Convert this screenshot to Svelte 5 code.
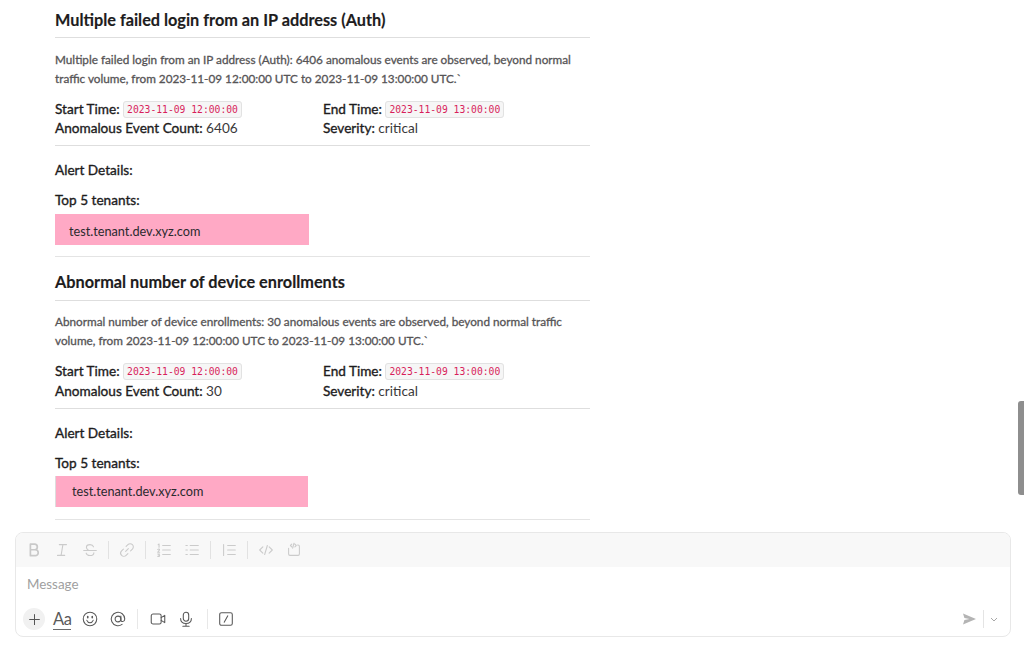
<script>
  const alerts = [
    { title: 'Multiple failed login from an IP address (Auth)', text: 'Multiple failed login from an IP address (Auth): 6406 anomalous events are observed, beyond normal traffic volume, from 2023-11-09 12:00:00 UTC to 2023-11-09 13:00:00 UTC.`', count: '6406', cls: 'first' },
    { title: 'Abnormal number of device enrollments', text: 'Abnormal number of device enrollments: 30 anomalous events are observed, beyond normal traffic volume, from 2023-11-09 12:00:00 UTC to 2023-11-09 13:00:00 UTC.`', count: '30', cls: 'second' }
  ];
</script>

<div class="page">
  <main class="feed">
    {#each alerts as a}
      <section class={'alert ' + a.cls}>
        <h2>{a.title}</h2>
        <p class="desc">{a.text}</p>
        <div class="fields">
          <div><b>Start Time:</b> <code>2023-11-09 12:00:00</code></div>
          <div><b>End Time:</b> <code>2023-11-09 13:00:00</code></div>
          <div><b>Anomalous Event Count:</b> {a.count}</div>
          <div><b>Severity:</b> critical</div>
        </div>
        <p class="label details">Alert Details:</p>
        <p class="label tenants">Top 5 tenants:</p>
        <div class="pink">test.tenant.dev.xyz.com</div>
      </section>
    {/each}
  </main>

  <div class="scrollbar"></div>

  <div class="composer">
    <div class="toolbar">
      <svg class="ti bold" viewBox="0 0 20 20"><path d="M6 3.500h4.600a3 3 0 0 1 0 6.200H6zM6 9.700h5.400a3.200 3.200 0 0 1 0 6.600H6z"/></svg>
      <svg class="ti" viewBox="0 0 20 20"><path d="M7 4h8M5 16h8M11 4 9 16"/></svg>
      <svg class="ti" viewBox="0 0 20 20"><path d="M14 6.500C13.400 4.800 11.800 4 10 4 8 4 6 5 6 7c0 1.200.7 2.200 2 3M3 10.500h14M14.300 13c0 2-2 3.200-4.300 3.200-2 0-3.800-1-4.300-2.700"/></svg>
      <span class="sep"></span>
      <svg class="ti" viewBox="0 0 20 20"><path d="M8.500 11.500 11.500 8.500M9 6l2-2a3.500 3.500 0 0 1 5 5l-2 2M11 14l-2 2a3.500 3.500 0 0 1-5-5l2-2"/></svg>
      <span class="sep"></span>
      <svg class="ti" viewBox="0 0 20 20"><path d="M8.500 5H17M8.500 10H17M8.500 15H17M3.500 4l1-.6V7M3 9.500c1-1 2.200-.5 2 .4L3 12.500h2.200M3 14.500h2l-1 1.200c1 0 1.300.5 1.100 1-.2.600-1.300.8-2.100.3"/></svg>
      <svg class="ti" viewBox="0 0 20 20"><path d="M8 5h9M8 10h9M8 15h9M3.200 5h1.600M3.200 10h1.600M3.200 15h1.600"/></svg>
      <span class="sep"></span>
      <svg class="ti" viewBox="0 0 20 20"><path d="M4 4v12M8.500 5H17M8.500 10H17M8.500 15H17"/></svg>
      <span class="sep"></span>
      <svg class="ti" viewBox="0 0 20 20"><path d="M6.500 6.500 3 10l3.500 3.500M13.500 6.500 17 10l-3.500 3.500M11.500 5 8.500 15"/></svg>
      <svg class="ti" viewBox="0 0 20 20"><path d="M4 8v6.500A1.500 1.500 0 0 0 5.500 16h9a1.500 1.500 0 0 0 1.500-1.500V6a1.500 1.500 0 0 0-1.500-1.500H14M7.500 3.500 6 5l1.500 1.500M11 3.500 12.500 5 11 6.500M10 2.500 8.500 8"/></svg>
    </div>
    <div class="input">Message</div>
    <div class="actions">
      <span class="plus"><svg viewBox="0 0 20 20"><path d="M10 3.500v13M3.500 10h13"/></svg></span>
      <span class="aa">Aa</span>
      <svg class="ai" viewBox="0 0 20 20"><circle cx="10" cy="10" r="7.500"/><path d="M6.500 11.500c.8 2 2 2.700 3.500 2.700s2.700-.7 3.500-2.700"/><path class="eye" d="M7.500 7.200v1.400M12.500 7.200v1.400"/></svg>
      <svg class="ai" viewBox="0 0 20 20"><circle cx="10" cy="10" r="3.200"/><path d="M13.200 6.800v4.400c0 2.400 4.300 2.300 4.300-1.200a7.500 7.500 0 1 0-3 6"/></svg>
      <span class="asep one"></span>
      <svg class="ai" viewBox="0 0 20 20"><rect x="2.500" y="4.500" width="11" height="11" rx="2"/><path d="M13.500 8.500 17.500 6v8l-4-2.500"/></svg>
      <svg class="ai" viewBox="0 0 20 20"><rect x="7" y="2.500" width="6" height="10" rx="3"/><path d="M4 9.500c0 3.500 2.500 5.500 6 5.500s6-2 6-5.500M10 15v3M6.500 18h7"/></svg>
      <span class="asep two"></span>
      <svg class="ai slash" viewBox="0 0 20 20"><rect x="3" y="3" width="14" height="14" rx="2"/><path d="M12 6.500 8 13.500"/></svg>
      <span class="spacer"></span>
      <svg class="send" viewBox="0 0 14 12"><path d="M0 0 14 6 0 12 1.500 7.200 7 6 1.500 4.800z"/></svg>
      <span class="sendsep"></span>
      <svg class="chev" viewBox="0 0 10 10"><path d="M2 4 5 7 8 4"/></svg>
    </div>
  </div>
</div>

<style>
  :global(body) { margin: 0; background: #fff; }
  .page {
    position: relative;
    width: 1024px;
    height: 646px;
    overflow: hidden;
    font-family: Lato, "Open Sans", sans-serif;
    font-size: 13.600px;
    color: #1d1c1d;
    display: flex;
    flex-direction: column;
  }
  .feed {
    height: 532px;
    flex: none;
    overflow: hidden;
    padding: 8px 0 0 55px;
    box-sizing: border-box;
  }
  .alert { width: 535px; border-bottom: 1px solid #e4e4e4; }
  .alert.first { height: 248px; }
  .alert.second { height: 262px; }
  h2 {
    margin: 0;
    height: 29px;
    font-size: 16.300px;
    line-height: 24px;
    font-weight: 700;
    border-bottom: 1px solid #dedede;
    -webkit-text-stroke: 0.15px #1d1c1d;
  }
  .desc {
    margin: 12px 0 0;
    font-size: 11.760px;
    line-height: 19px;
    color: #565456;
    -webkit-text-stroke: 0.3px #565456;
  }
  .fields {
    margin-top: 11px;
    padding-bottom: 8px;
    display: grid;
    grid-template-columns: 268px 1fr;
    grid-auto-rows: 19px;
    line-height: 20px;
    font-size: 13.600px;
    color: #3a393a;
    border-bottom: 1px solid #dedede;
  }
  .fields b { font-weight: 400; color: #1d1c1d; -webkit-text-stroke: 0.35px #1d1c1d; }
  code {
    font-family: "DejaVu Sans Mono", monospace;
    font-size: 9.700px;
    color: #d81e5b;
    background: #f6f6f6;
    border: 1px solid #e2e2e2;
    border-radius: 3px;
    padding: 2px 3px;
    position: relative;
    top: -1px;
  }
  .label {
    margin: 0;
    font-size: 13.600px;
    line-height: 20px;
    -webkit-text-stroke: 0.35px #1d1c1d;
  }
  .details { margin-top: 14px; }
  .tenants { margin-top: 10px; }
  .pink {
    margin-top: 4px;
    width: 254px;
    height: 31px;
    line-height: 35px;
    padding-left: 14px;
    box-sizing: border-box;
    background: #ffa9c5;
    font-size: 12.700px;
    color: #2a2a2e;
  }
  .second h2 { height: 30px; padding-top: 13px; }
  .second .desc { margin-top: 11px; }
  .second .fields { grid-auto-rows: 20px; padding-bottom: 7px; }
  .second .pink { margin-top: 3px; padding-left: 16px; width: 253px; border-left: 1px solid #ddd; line-height: 31px; }
  .scrollbar {
    position: absolute;
    right: 0;
    top: 401px;
    width: 6px;
    height: 94px;
    background: #8e8e8e;
    border-radius: 3px 0 0 3px;
  }
  .composer {
    margin: 0 13px 0 15px;
    height: 105px;
    flex: none;
    box-sizing: border-box;
    border: 1px solid #e8e8e8;
    border-radius: 8px;
    overflow: hidden;
    display: flex;
    flex-direction: column;
  }
  .toolbar {
    height: 34px;
    flex: none;
    background: #f8f8f8;
    display: flex;
    align-items: center;
    padding-left: 4px;
  }
  .ti { width: 18px; height: 18px; margin: 0 5px; fill: none; stroke: #cbcbcb; stroke-width: 1.200; stroke-linecap: round; stroke-linejoin: round; flex: none; }
  .ti.bold { stroke-width: 1.900; stroke: #c9c9c9; }
  .sep { width: 1px; height: 18px; background: #e2e2e2; flex: none; margin: 0 4px 0 4px; }
  .input {
    height: 34px;
    flex: none;
    padding-left: 11px;
    line-height: 35px;
    font-size: 13.400px;
    color: #a0a0a0;
  }
  .actions {
    flex: 1;
    display: flex;
    align-items: center;
    padding: 2px 11px 1px 4px;
  }
  .plus {
    width: 22px;
    height: 22px;
    margin: 0 3px;
    border-radius: 50%;
    background: #f1f1f1;
    display: flex;
    align-items: center;
    justify-content: center;
    flex: none;
  }
  .plus svg { width: 15px; height: 15px; fill: none; stroke: #555; stroke-width: 1.400; stroke-linecap: round; }
  .aa {
    font-size: 16.500px;
    line-height: 19px;
    color: #5a5a5a;
    border-bottom: 1px solid #6a6a6a;
    margin: 1px 5px 0;
    width: 18px;
    flex: none;
    letter-spacing: -0.300px;
  }
  .ai { width: 18px; height: 18px; fill: none; stroke: #5a5a5a; stroke-width: 1.200; stroke-linecap: round; stroke-linejoin: round; flex: none; margin: 0 5px; }
  .eye { stroke-width: 1.800; }
  .asep { width: 1px; height: 20px; background: #e8e8e8; flex: none; }
  .asep.one { margin: 0 6px 0 5px; }
  .asep.two { margin: 0 6px 0 7px; }
  .ai.slash { margin-left: 3px; }
  .spacer { flex: 1; }
  .send { width: 13px; height: 12px; fill: #b4b4b4; flex: none; margin-right: 7px; }
  .sendsep { width: 1px; height: 18px; background: #e4e4e4; flex: none; margin-right: 5px; }
  .chev { width: 10px; height: 10px; fill: none; stroke: #a8a8a8; stroke-width: 1; flex: none; }
</style>
